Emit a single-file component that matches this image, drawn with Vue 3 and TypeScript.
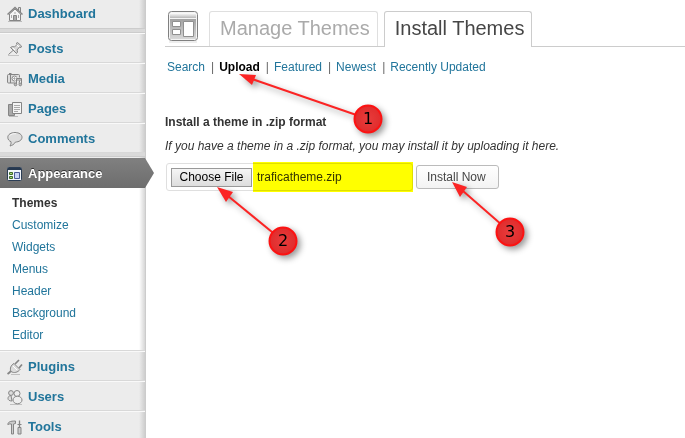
<script setup lang="ts">
import { onMounted, ref } from 'vue'

const topItems = ['Posts', 'Media', 'Pages', 'Comments']
const bottomItems = ['Plugins', 'Users', 'Tools']
const submenu = ['Themes', 'Customize', 'Widgets', 'Menus', 'Header', 'Background', 'Editor']
const filters = ['Search', 'Upload', 'Featured', 'Newest', 'Recently Updated']

// Small grey glyphs of the admin menu, drawn on a 16 x 16 grid.
const icons: Record<string, string> = {
  Posts: '<path d="M1 14.5h11" stroke="#c4c4c4"/><path d="M1.500 13.500L6 9.500"/><path fill="#d8d8d8" d="M3.500 6.500l2-1 2 .5 2.500-2.500L9.500 2l1-.5 4 3.500-.5 1.500-1.500-.5-2.500 3 .5 2-1 1.500z"/><path stroke="#fff" d="M6 7l2 2M10 4l2 2"/>',
  Media: '<rect x=".5" y="3.500" width="12" height="8.500" rx="1" fill="#ddd"/><path d="M2 2.500h2.500M3.500 4v8"/><circle cx="7.500" cy="7.500" r="2.500" fill="#fff"/><circle cx="7.500" cy="7.500" r=".7"/><path stroke="#ececec" stroke-width="3" d="M10 13V8h5v5"/><path d="M9.500 13V7.500h5V13M9.500 9h5"/><circle cx="8.500" cy="13.500" r="1.300" fill="#bbb"/><circle cx="13.300" cy="13.500" r="1.300" fill="#bbb"/>',
  Pages: '<path fill="#a9a9a9" d="M1.500 3.500h6v11h-6z"/><path fill="#f5f5f5" d="M5.500 1.500h9v11h-9z"/><path stroke="#aaa" d="M7 4.500h6M7 6.500h6M7 8.500h6M7 10.500h4"/><path stroke="#bbb" d="M2 15.500h9"/>',
  Comments: '<path fill="#ddd" d="M8 1.500c4 0 7 2 7 4.800s-3 4.700-6.500 4.700C7 13.500 5 14.500 3 15c1-1.500 1.200-2.500 1-4.300C2 10 .8 8.300.8 6.300.8 3.500 4 1.500 8 1.500z"/><path stroke="#f6f6f6" d="M2.500 5C4 3 6 2.700 9 2.700"/>',
  Plugins: '<path stroke="#c0c0c0" d="M4 15.500h9"/><path d="M.5 15l2-1.500 2-2.500" stroke-width="1.800"/><path fill="#ddd" d="M4 12.500C2.500 9.500 4 6 7 4.500l6 6c-2 2.800-6 4-9 2z"/><path d="M8 5l4-4M12 9l3-3.500" stroke-width="1.700"/><path stroke="#fff" d="M6 7l4 4"/>',
  Users: '<path stroke="#c0c0c0" d="M3 15.500h12"/><circle cx="4" cy="4" r="2.400" fill="#ddd"/><path fill="#ddd" d="M4 6.500c-2 0-3 1.500-3 3s1.500 2.500 4 2.500z"/><circle cx="10" cy="4.500" r="3" fill="#eee"/><ellipse cx="10.500" cy="11" rx="4.500" ry="3.800" fill="#eee"/>',
  Tools: '<path fill="#ccc" d="M.8 5.500C1 3 3 2 8.500 2v2.500l-2 .5V15h-2V5c-1.500-.3-2.500 0-3.700.5z"/><path d="M12.500 1.500V8" stroke-width="1.300"/><path fill="#ccc" d="M11 8.500h3v6.500h-3z"/><path d="M10.500 5.500h4"/>',
}

interface Marker { n: number; cx: number; cy: number; tx: number; ty: number; head: string }
const markers: Marker[] = [
  { n: 1, cx: 368, cy: 119, tx: 252, ty: 79, head: '239,74 256,75 252,85' },
  { n: 2, cx: 283, cy: 241, tx: 228, ty: 196, head: '217,187 233,192 226,202' },
  { n: 3, cx: 510, cy: 232, tx: 463, ty: 191, head: '452,182 467,187 460,197' },
]

const themeFile = ref<HTMLInputElement | null>(null)

onMounted(() => {
  const transfer = new DataTransfer()
  transfer.items.add(new File([''], 'traficatheme.zip', { type: 'application/zip' }))
  if (themeFile.value) themeFile.value.files = transfer.files
})
</script>

<template>
  <div class="admin">
    <nav class="sidebar" aria-label="Main menu">
      <a href="#" class="item first">
        <svg class="icon" viewBox="0 0 16 16" aria-hidden="true">
          <path stroke="#bbb" d="M1 15.500h14" />
          <path fill="#f4f4f4" d="M2.500 8v6.500h11V8L8 3z" />
          <path d="M11.500 5V1.500h2V7" fill="#ddd" />
          <path d="M.5 8.500L8 1.500l7.500 7" stroke-width="1.500" />
          <path fill="#aaa" d="M6.500 14.500v-5h3v5z" />
          <path stroke="#aaa" d="M4.500 9v3M11.500 9v3M7 7h2" />
        </svg>
        Dashboard
      </a>
      <div class="separator"></div>
      <a v-for="name in topItems" :key="name" href="#" class="item">
        <svg class="icon" viewBox="0 0 16 16" aria-hidden="true" v-html="icons[name]"></svg>
        {{ name }}
      </a>
      <div class="separator"></div>
      <a href="#" class="item current">
        <svg class="icon" viewBox="0 0 16 16" aria-hidden="true">
          <rect x=".5" y="1.500" width="14" height="13" rx="1" fill="#f3f6fb" stroke="#2b3d55" />
          <path fill="#26384f" stroke="none" d="M1 2h13v2H1z" />
          <path fill="#a6d37a" stroke="#3f6b2a" d="M2.500 6.500h3v2h-3zM2.500 10.500h3v2h-3z" />
          <path fill="#c9d3f5" stroke="#4a5a96" d="M7.500 6.500h5v6h-5z" />
        </svg>
        Appearance
      </a>
      <ul class="submenu">
        <li v-for="name in submenu" :key="name">
          <a href="#" :class="{ active: name === 'Themes' }">{{ name }}</a>
        </li>
      </ul>
      <a v-for="name in bottomItems" :key="name" href="#" class="item">
        <svg class="icon" viewBox="0 0 16 16" aria-hidden="true" v-html="icons[name]"></svg>
        {{ name }}
      </a>
    </nav>

    <main class="content">
      <header class="tabs">
        <svg class="screen-icon" viewBox="0 0 32 32" aria-hidden="true">
          <defs>
            <linearGradient id="bar" x1="0" y1="0" x2="0" y2="1">
              <stop offset="0" stop-color="#fff" />
              <stop offset="1" stop-color="#b8b8b8" />
            </linearGradient>
            <linearGradient id="panel" x1="0" y1="0" x2="0" y2="1">
              <stop offset="0" stop-color="#a2a2a2" />
              <stop offset="1" stop-color="#d8d8d8" />
            </linearGradient>
          </defs>
          <path d="M2 31h28" stroke="#ddd" />
          <rect x="1.500" y=".5" width="29" height="29" rx="3" fill="#f4f4f4" stroke="#808080" />
          <path d="M3 2h26v5H3z" fill="url(#bar)" />
          <path d="M3 8h26v20H3z" fill="url(#panel)" />
          <path d="M5.500 10.500h8v5h-8zM5.500 18.500h8v5h-8zM16.500 10.500h10v15h-10z" fill="#fff" stroke="#909090" />
        </svg>
        <a href="#" class="tab">Manage Themes</a>
        <a href="#" class="tab selected">Install Themes</a>
      </header>

      <ul class="filters">
        <li v-for="name in filters" :key="name">
          <a href="#" :class="{ active: name === 'Upload' }">{{ name }}</a>
        </li>
      </ul>

      <h4>Install a theme in .zip format</h4>
      <p class="hint">If you have a theme in a .zip format, you may install it by uploading it here.</p>
      <form class="upload" @submit.prevent>
        <div class="file">
          <input ref="themeFile" type="file" accept=".zip" aria-label="Theme zip file" />
          <span class="highlight"></span>
        </div>
        <button type="submit" class="install">Install Now</button>
      </form>
    </main>

    <svg class="markers" width="685" height="438" viewBox="0 0 685 438" aria-hidden="true">
      <defs>
        <radialGradient id="ball">
          <stop offset="0" stop-color="#e83c3c" />
          <stop offset="1" stop-color="#e02c2c" />
        </radialGradient>
      </defs>
      <g v-for="m in markers" :key="m.n" class="marker">
        <line :x1="m.cx" :y1="m.cy" :x2="m.tx" :y2="m.ty" stroke="#fb2424" stroke-width="2" />
        <polygon :points="m.head" fill="#fb2424" />
        <circle :cx="m.cx" :cy="m.cy" r="13.500" fill="url(#ball)" stroke="#fc1212" stroke-width="2" />
        <text :x="m.cx" :y="m.cy + 5" text-anchor="middle">{{ m.n }}</text>
      </g>
    </svg>
  </div>
</template>

<style>
body {
  margin: 0;
  background: #fff;
}
</style>

<style scoped>
.admin {
  position: relative;
  display: flex;
  height: 100vh;
  overflow: hidden;
  font: 12px/18px "Liberation Sans", Arial, sans-serif;
  color: #333;
}
a {
  color: #21759b;
  text-decoration: none;
}
ul {
  margin: 0;
  padding: 0;
  list-style: none;
}
.sidebar {
  flex: 0 0 145px;
  border-right: 1px solid #ccc;
  background: linear-gradient(to right, transparent 139px, rgba(0, 0, 0, 0.13)), #ececec;
}
.item {
  display: flex;
  align-items: center;
  gap: 6px;
  box-sizing: border-box;
  height: 30px;
  padding: 2px 0 0 7px;
  border-top: 1px solid #f9f9f9;
  border-bottom: 1px solid #d8d8d8;
  font-size: 13px;
  font-weight: bold;
}
.item.first {
  height: 29px;
  padding-top: 0;
  border-top: 0;
  border-color: #ccc;
}
.icon {
  width: 16px;
  height: 16px;
  margin-right: -1px;
  fill: none;
  stroke: #858585;
}
.separator {
  height: 3px;
  background: #dadada;
  border-bottom: 1px solid #ccc;
}
.item.current {
  position: relative;
  margin-top: 1px;
  border: 0;
  background: linear-gradient(#808080, #6d6d6d);
  color: #fff;
  text-shadow: 0 -1px 0 #333;
}
.item.current::after {
  content: "";
  position: absolute;
  left: 100%;
  top: 0;
  width: 9px;
  height: 30px;
  background: linear-gradient(#808080, #6d6d6d);
  clip-path: polygon(0 0, 100% 50%, 0 100%);
}
.submenu {
  padding: 4px 0;
  background: linear-gradient(to right, transparent 139px, rgba(0, 0, 0, 0.16)), #fff;
  border-bottom: 1px solid #d8d8d8;
}
.submenu a {
  display: block;
  padding-left: 12px;
  line-height: 22px;
}
.submenu a.active {
  color: #333;
  font-weight: bold;
}
.content {
  flex: 1;
  min-width: 0;
  padding: 11px 0 0 19px;
}
.tabs {
  display: flex;
  gap: 6px;
  border-bottom: 1px solid #ccc;
}
.screen-icon {
  width: 32px;
  height: 32px;
  margin: 0 4px 0 2px;
  fill: none;
}
.tab {
  padding: 2px 7px 3px 10px;
  border: 1px solid #dfdfdf;
  border-bottom: 0;
  border-radius: 3px 3px 0 0;
  font-size: 20px;
  line-height: 29px;
  color: #aaa;
}
.tab.selected {
  margin-bottom: -1px;
  border-color: #ccc;
  background: #fff;
  color: #464646;
}
.filters {
  display: flex;
  padding: 11px 0 0 2px;
}
.filters li + li::before {
  content: "|";
  padding: 0 5px 0 6px;
  color: #666;
}
.filters .active {
  color: #000;
  font-weight: bold;
}
h4 {
  margin: 37px 0 6px;
  font-size: 12px;
}
.hint {
  margin: 0;
  font-style: italic;
}
.upload {
  display: flex;
  align-items: center;
  gap: 3px;
  padding: 8px 0 0 1px;
}
.file {
  position: relative;
  width: 247px;
}
.file input {
  display: block;
  box-sizing: border-box;
  width: 100%;
  height: 28px;
  padding: 4px 4px 3px;
  border: 1px solid #dfdfdf;
  border-radius: 3px;
  font: inherit;
  color: #333;
}
.file input::file-selector-button {
  box-sizing: border-box;
  width: 81px;
  height: 19px;
  margin: 0 5px 0 0;
  padding: 0;
  border: 1px solid #999;
  background: linear-gradient(#f5f5f5, #ddd);
  font: inherit;
  line-height: 17px;
  color: #000;
}
.highlight {
  position: absolute;
  inset: -1px 0 -1px 87px;
  background: #ff0;
  mix-blend-mode: multiply;
  pointer-events: none;
}
.install {
  box-sizing: border-box;
  height: 24px;
  padding: 0 12px 0 10px;
  border: 1px solid #bbb;
  border-radius: 3px;
  background: linear-gradient(#fff, #f3f3f3);
  font: inherit;
  color: #464646;
}
.markers {
  position: absolute;
  left: 0;
  top: 0;
  pointer-events: none;
}
.marker {
  filter: drop-shadow(3px 3px 3px rgba(0, 0, 0, 0.4));
}
.marker text {
  font: 16px "DejaVu Sans", sans-serif;
  fill: #000;
}
</style>
